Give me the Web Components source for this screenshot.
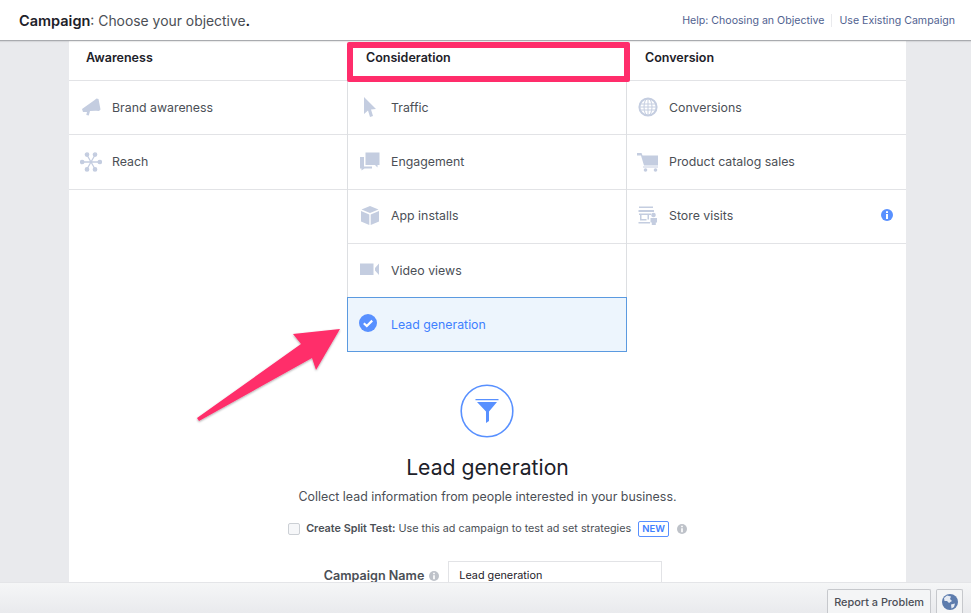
<!DOCTYPE html>
<html>
<head>
<meta charset="utf-8">
<style>
  html, body { margin: 0; height: 100%; overflow: hidden; }
  body { font-family: Inter, "Liberation Sans", sans-serif; background: #e9eaed; }
</style>
</head>
<body>
<campaign-page>
  <top-bar slot="top"></top-bar>
  <objective-table>
    <objective-column title="Awareness" slot="a">
      <objective-row icon="megaphone">Brand awareness</objective-row>
      <objective-row icon="reach">Reach</objective-row>
    </objective-column>
    <objective-column title="Consideration" slot="b" divided>
      <objective-row icon="cursor">Traffic</objective-row>
      <objective-row icon="chat">Engagement</objective-row>
      <objective-row icon="box">App installs</objective-row>
      <objective-row icon="video">Video views</objective-row>
      <objective-row icon="check" selected>Lead generation</objective-row>
    </objective-column>
    <objective-column title="Conversion" slot="c" last>
      <objective-row icon="globe" tight>Conversions</objective-row>
      <objective-row icon="cart" tight>Product catalog sales</objective-row>
      <objective-row icon="store" tight info>Store visits</objective-row>
    </objective-column>
  </objective-table>
  <objective-detail></objective-detail>
  <report-bar slot="bottom"></report-bar>
  <call-outs slot="over"></call-outs>
</campaign-page>

<script>
const ICONS = {
  megaphone: `<path fill="currentColor" d="M2 13 14 4.5 16.5 2.5 18.5 3 20.5 13.5 19 15 16 14.8 10 15 8.8 19.6 6.3 19 7 16 3 16Z"/>`,
  reach: `<g stroke="currentColor" stroke-width="1.3" fill="currentColor"><path d="M11 11 7 4M11 11 15 4M11 11 7 18M11 11 15 18M11 11 3 11M11 11 19 11"/><circle cx="7" cy="3.6" r="1.7"/><circle cx="15" cy="3.6" r="1.7"/><circle cx="7" cy="18.4" r="1.7"/><circle cx="15" cy="18.4" r="1.7"/><circle cx="2.2" cy="11" r="1.7"/><circle cx="19.8" cy="11" r="1.7"/></g>`,
  cursor: `<path fill="currentColor" d="M5 1 17 13 12 13.5 14 20 11 21 9 14.5 5 18Z"/>`,
  chat: `<path fill="currentColor" d="M6.5 1.5H20.5V14H18.5V16.5L16 14H6.5ZM1 6H5V15.5H13V17.5H5.5L2.5 19.5V17.5H1Z"/>`,
  box: `<path fill="currentColor" d="M11 1 19.5 4.5 11 8 2.5 4.5ZM2 6 10.3 9.5V20L2 16.5ZM20 6V16.5L11.7 20V9.5Z"/>`,
  video: `<path fill="currentColor" d="M1 4.5H14.5V16H1ZM20 4.5V16L16 11.5V9Z"/>`,
  globe: `<circle cx="11" cy="11" r="8.6" fill="none" stroke="currentColor" stroke-width="2"/><ellipse cx="11" cy="11" rx="4" ry="8.6" fill="none" stroke="currentColor"/><path d="M11 2V20M2.5 8H19.5M2.5 14H19.5M2 11H20" fill="none" stroke="currentColor"/>`,
  cart: `<path fill="currentColor" d="M0 2H4.5L5.5 4.5H21V14.5H7L4 4.5H0Z"/><path fill="currentColor" d="M6 15.5H21V16.5H6Z"/><circle cx="8.5" cy="19" r="1.8" fill="currentColor"/><circle cx="18.5" cy="19" r="1.8" fill="currentColor"/>`,
  store: `<path fill="currentColor" d="M2 1.5H16V3H2ZM1.5 5H17V7H1.5ZM2 8.5H14V10H12V14.5H10.5V10H4.5V14H9.5V15.5H3V10H2ZM1.5 17H13V18.5H1.5Z"/><circle cx="16.5" cy="10" r="2.3" fill="currentColor"/><path fill="currentColor" d="M13.5 13H20V17.5H18.8V20H14.8V17.5H13.5Z"/>`,
  check: `<circle cx="11" cy="10" r="9" fill="#5890ff"/><path d="M6.8 10.2 9.8 13 15.2 7.6" fill="none" stroke="#fff" stroke-width="2.2"/>`
};

class CampaignPage extends HTMLElement {
  constructor() {
    super();
    this.attachShadow({ mode: 'open' }).innerHTML = `
      <style>
        :host { display: flex; flex-direction: column; height: 613px; position: relative; overflow: hidden; }
        .main { flex: 1; min-height: 0; margin: 0 65px 0 69px; background: #fff; overflow: hidden; }
      </style>
      <slot name="top"></slot>
      <div class="main"><slot></slot></div>
      <slot name="bottom"></slot>
      <slot name="over"></slot>`;
  }
}

class TopBar extends HTMLElement {
  constructor() {
    super();
    this.attachShadow({ mode: 'open' }).innerHTML = `
      <style>
        :host { display: flex; align-items: center; height: 41px; flex: none; box-sizing: border-box; padding: 0 16px 0 19px; background: #fff; border-bottom: 1px solid #a9abaf; box-shadow: 0 1px 1px rgba(0,0,0,.08); position: relative; font-size: 13.9px; color: #4b4f56; }
        b { color: #1d2129; font-weight: 600; font-size: 14.5px; }
        .links { margin-left: auto; display: flex; font-size: 10.6px; color: #516290; }
        .links span + span { margin-left: 7px; padding-left: 7px; border-left: 1px solid #e9eaed; }
      </style>
      <div><b>Campaign</b>: Choose your objective<b>.</b></div>
      <div class="links"><span>Help: Choosing an Objective</span><span>Use Existing Campaign</span></div>`;
  }
}

class ObjectiveTable extends HTMLElement {
  constructor() {
    super();
    this.attachShadow({ mode: 'open' }).innerHTML = `
      <style>
        :host { display: grid; grid-template-columns: 278px 280px 279px; }
      </style>
      <slot name="a"></slot><slot name="b"></slot><slot name="c"></slot>`;
  }
}

class ObjectiveColumn extends HTMLElement {
  constructor() {
    super();
    this.attachShadow({ mode: 'open' }).innerHTML = `
      <style>
        :host { display: block; min-width: 0; }
        .head { height: 40px; box-sizing: border-box; padding: 9px 0 0 17px; font-size: 12.5px; line-height: 15px; font-weight: 600; color: #1d2129; border-bottom: 1px solid #e2e3e6; }
        :host([divided]) .head { padding-left: 19px; }
        :host([last]) .head { padding-left: 18px; }
        :host([divided]) .body { border-left: 1px solid #dddfe2; border-right: 1px solid #dddfe2; }
      </style>
      <div class="head"></div>
      <div class="body"><slot></slot></div>`;
  }
  connectedCallback() {
    this.shadowRoot.querySelector('.head').textContent = this.getAttribute('title');
    this.removeAttribute('title');
  }
}

class ObjectiveRow extends HTMLElement {
  constructor() {
    super();
    this.attachShadow({ mode: 'open' }).innerHTML = `
      <style>
        :host { display: flex; align-items: center; height: 54.4px; box-sizing: border-box; padding: 0 12px 1px 11px; border-bottom: 1px solid #e2e3e6; font-size: 12.35px; color: #4b4f56; position: relative; }
        :host([tight]) { padding-left: 10px; }
        svg.icon { width: 22px; height: 22px; flex: none; margin-right: 10px; color: #c4cde0; }
        :host([selected]) { background: #edf5fd; color: #4080ff; outline: 1px solid #5b9ae0; outline-offset: -1px; margin: -1.6px -1px 0; height: 55px; padding: 1px 13px 0 10px; }
        :host([selected]) svg.icon { margin-right: 12px; }
        .info { display: none; position: absolute; right: 13px; top: 19px; width: 12px; height: 12px; }
        :host([info]) .info { display: block; }
      </style>
      <svg class="icon" viewBox="0 0 22 22"></svg>
      <slot></slot>
      <svg class="info" viewBox="0 0 12 12"><circle cx="6" cy="6" r="6" fill="#5890ff"/><path d="M5 5H7V10H5ZM5 2.2H7V4H5Z" fill="#fff"/></svg>`;
  }
  connectedCallback() {
    this.shadowRoot.querySelector('.icon').innerHTML = ICONS[this.getAttribute('icon')];
  }
}

class HelpDot extends HTMLElement {
  constructor() {
    super();
    this.attachShadow({ mode: 'open' }).innerHTML = `
      <style>:host { display: inline-flex; } svg { width: 10px; height: 10px; }</style>
      <svg viewBox="0 0 12 12"><circle cx="6" cy="6" r="6" fill="#bec2c9"/><path d="M5 5H7V10H5ZM5 2.2H7V4H5Z" fill="#fff"/></svg>`;
  }
}

class ObjectiveDetail extends HTMLElement {
  constructor() {
    super();
    this.attachShadow({ mode: 'open' }).innerHTML = `
      <style>
        :host { display: flex; flex-direction: column; align-items: center; padding-top: 32px; }
        .funnel { width: 54px; height: 54px; display: block; margin-left: -1px; }
        h2 { margin: 16px 0 0; font-size: 21.2px; line-height: 26px; font-weight: 400; color: #1d2129; }
        p { margin: 9px 0 0; font-size: 12.4px; line-height: 16px; color: #4b4f56; }
        .split { display: flex; align-items: center; margin: 16px 0 0 0; font-size: 10.8px; line-height: 16px; color: #4b4f56; }
        .box { width: 10px; height: 10px; border: 1px solid #ccd0d5; border-radius: 2px; background: #f6f7f9; margin-right: 6px; }
        .split b { font-weight: 600; margin-right: 3px; }
        .new { margin: 0 8px 0 7px; padding: 0 3px; height: 14px; line-height: 14px; border: 1px solid #5890ff; border-radius: 2px; color: #4080ff; font-size: 9.5px; font-weight: 600; }
        .name { display: flex; align-items: center; margin: 24px 0 0 11px; }
        label { font-size: 12.6px; font-weight: 600; color: #4b4f56; margin-right: 5px; }
        .input { margin-left: 9px; width: 214px; height: 30px; box-sizing: border-box; padding: 0 10px; border: 1px solid #e2e3e6; font-size: 10.8px; line-height: 28px; color: #1d2129; }
      </style>
      <svg class="funnel" viewBox="0 0 54 54">
        <circle cx="27" cy="27" r="25.8" fill="none" stroke="#5890ff" stroke-width="1.6"/>
        <path fill="#5890ff" d="M15.5 15H38.5V16.2H15.5ZM17 18H37L29 27.5V37L26 39V27.5Z"/>
      </svg>
      <h2>Lead generation</h2>
      <p>Collect lead information from people interested in your business.</p>
      <div class="split"><span class="box"></span><b>Create Split Test:</b> Use this ad campaign to test ad set strategies<span class="new">NEW</span><help-dot></help-dot></div>
      <div class="name"><label>Campaign Name</label><help-dot></help-dot><div class="input">Lead generation</div></div>`;
  }
}

class ReportBar extends HTMLElement {
  constructor() {
    super();
    this.attachShadow({ mode: 'open' }).innerHTML = `
      <style>
        :host { display: flex; justify-content: flex-end; align-items: flex-end; height: 31px; flex: none; box-sizing: border-box; padding-right: 8px; gap: 5px; background: linear-gradient(#f5f6f7, #e9eaed); border-top: 1px solid #e4e5e8; position: relative; }
        .btn { height: 24px; box-sizing: border-box; border: 1px solid #c6c8cc; border-bottom: 0; border-radius: 2px 2px 0 0; background: #f4f5f6; font-size: 10.9px; font-weight: 500; line-height: 24px; color: #4b4f56; padding: 0 6px; }
        .globe { width: 27px; padding: 4px 0 0 5px; }
        svg { display: block; width: 16px; height: 16px; }
      </style>
      <div class="btn">Report a Problem</div>
      <div class="btn globe"><svg viewBox="0 0 16 16"><circle cx="8" cy="8" r="8" fill="#5d7cad"/><path fill="#e6ebf3" d="M5 1.5 9 2.5 8 5 10 7 7 9 5 7 2.5 7 2 4ZM9 10.5 13 9.5 12 13 9.5 14.5Z"/></svg></div>`;
  }
}

class CallOuts extends HTMLElement {
  constructor() {
    super();
    this.attachShadow({ mode: 'open' }).innerHTML = `
      <style>
        :host { display: block; position: absolute; inset: 0; pointer-events: none; }
        .mark { position: absolute; left: 347px; top: 42px; width: 283px; height: 40px; box-sizing: border-box; border: 6px solid #ff2d6b; border-radius: 2px; }
        svg { position: absolute; left: 190px; top: 320px; width: 180px; height: 110px; overflow: visible; }
      </style>
      <div class="mark"></div>
      <svg viewBox="0 0 180 110">
        <defs><filter id="s" x="-10%" y="-10%" width="120%" height="130%"><feDropShadow dx="0" dy="1" stdDeviation="1" flood-color="#000" flood-opacity=".35"/></filter></defs>
        <path filter="url(#s)" fill="#ff2d6b" d="M7 98 111 24 103 14 150 9 126 50 122 38 9 101Z"/>
      </svg>`;
  }
}

customElements.define('campaign-page', CampaignPage);
customElements.define('top-bar', TopBar);
customElements.define('objective-table', ObjectiveTable);
customElements.define('objective-column', ObjectiveColumn);
customElements.define('objective-row', ObjectiveRow);
customElements.define('help-dot', HelpDot);
customElements.define('objective-detail', ObjectiveDetail);
customElements.define('report-bar', ReportBar);
customElements.define('call-outs', CallOuts);
</script>
</body>
</html>
